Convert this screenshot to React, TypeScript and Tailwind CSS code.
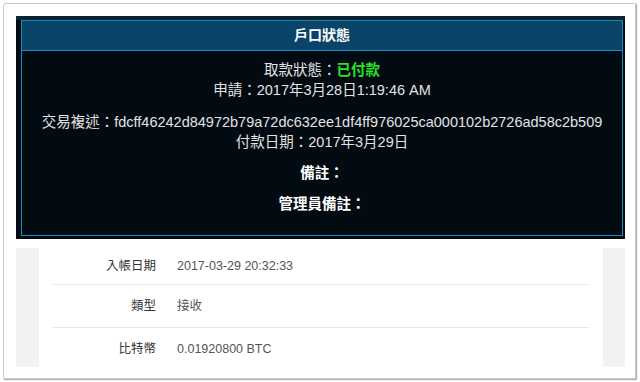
import React from "react";

const rows = [
    { label: "入帳日期", value: "2017-03-29 20:32:33" },
    { label: "類型", value: "接收" },
    { label: "比特幣", value: "0.01920800 BTC" },
];

const App = () => {
    return (
        <div
            className="w-[640px] h-[382px] bg-white p-[3px]"
            style={{ fontFamily: '"Liberation Sans", "Noto Sans CJK TC", sans-serif' }}
        >
            <div className="w-[633px] h-[376px] border border-[#c8c8c8] rounded-tl-[3px] shadow-[1px_1px_1px_rgba(0,0,0,0.35)] pt-[12px] pl-[12px] pr-[10px]">

                {/* account status panel */}
                <div className="bg-[#030b12] border-t-[4px] border-[#0b2433] pl-[5px] pr-[2px] pb-[3px]">
                    <div className="border border-[#2489bd] border-t-[#1e7fb0]">
                        <div className="h-[30px] bg-[#0a4468] border-b border-[#2489bd] flex items-center justify-center text-white text-[14px] font-bold">
                            戶口狀態
                        </div>
                        <div className="text-center text-[14.5px] text-[#e2e2e2] pt-[9px] pb-[21px]">
                            <div className="leading-[20px]">
                                <div>取款狀態：<span className="text-[#2be02b] font-bold">已付款</span></div>
                                <div>申請：2017年3月28日1:19:46 AM</div>
                            </div>
                            <div className="leading-[20px] mt-[12px]">
                                <div>交易複述：fdcff46242d84972b79a72dc632ee1df4ff976025ca000102b2726ad58c2b509</div>
                                <div>付款日期：2017年3月29日</div>
                            </div>
                            <div className="leading-[20px] mt-[11px] font-bold text-white">備註：</div>
                            <div className="leading-[20px] mt-[11px] font-bold text-white">管理員備註：</div>
                        </div>
                    </div>
                </div>

                {/* detail rows */}
                <div className="flex mt-[9px] h-[119px]">
                    <div className="w-[23px] bg-[#f2f2f4]" />
                    <div className="flex-1 px-[14px]">
                        {rows.map((row, i) => (
                            <div
                                key={row.label}
                                className={`flex items-center text-[12.5px] ${i < rows.length - 1 ? 'border-b border-[#e6e6e6]' : ''} ${i === 0 ? 'h-[37px]' : 'h-[43px]'}`}
                            >
                                <div className="w-[103px] text-right text-[#333]">{row.label}</div>
                                <div className="ml-[21px] text-[#555]">{row.value}</div>
                            </div>
                        ))}
                    </div>
                    <div className="w-[22px] bg-[#f2f2f4]" />
                </div>
            </div>
        </div>
    );
};

export default App;
